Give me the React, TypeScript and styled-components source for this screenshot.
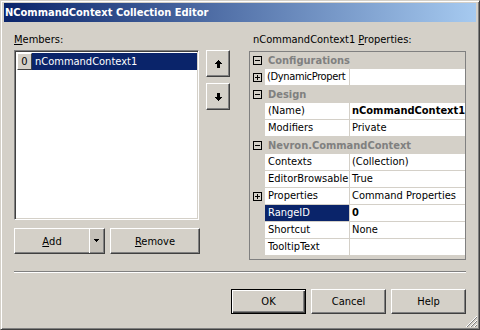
import React from "react";
import styled, { createGlobalStyle, css } from "styled-components";

const FONT = `"DejaVu Sans Condensed", "DejaVu Sans", sans-serif`;
const NAVY = "#0a246a";
const FACE = "#d4d0c8";

const GlobalStyle = createGlobalStyle`
  html, body { margin: 0; padding: 0; background: ${FACE}; }
  body { font-family: ${FONT}; font-size: 11px; }
`;

type Row =
  | { kind: "cat"; name: string }
  | {
      kind: "prop";
      name: string;
      value: string;
      bold?: boolean;
      plus?: boolean;
      selected?: boolean;
      tight?: boolean;
    };

const rows: Row[] = [
  { kind: "cat", name: "Configurations" },
  { kind: "prop", name: "(DynamicPropert", value: "", plus: true, tight: true },
  { kind: "cat", name: "Design" },
  { kind: "prop", name: "(Name)", value: "nCommandContext1", bold: true },
  { kind: "prop", name: "Modifiers", value: "Private" },
  { kind: "cat", name: "Nevron.CommandContext" },
  { kind: "prop", name: "Contexts", value: "(Collection)" },
  { kind: "prop", name: "EditorBrowsable", value: "True" },
  { kind: "prop", name: "Properties", value: "Command Properties", plus: true },
  { kind: "prop", name: "RangeID", value: "0", bold: true, selected: true },
  { kind: "prop", name: "Shortcut", value: "None" },
  { kind: "prop", name: "TooltipText", value: "" },
];

const Expander = ({ open }: { open: boolean }) => (
  <svg width="9" height="9" viewBox="0 0 9 9" shapeRendering="crispEdges">
    <rect x="0.5" y="0.5" width="8" height="8" fill="none" stroke="#000" />
    <rect x="2" y="4" width="5" height="1" fill="#000" />
    {!open && <rect x="4" y="2" width="1" height="5" fill="#000" />}
  </svg>
);

const ArrowUp = () => (
  <svg width="7" height="8" viewBox="0 0 7 8" shapeRendering="crispEdges">
    <rect x="3" y="0" width="1" height="1" />
    <rect x="2" y="1" width="3" height="1" />
    <rect x="1" y="2" width="5" height="1" />
    <rect x="0" y="3" width="7" height="1" />
    <rect x="2" y="4" width="3" height="4" />
  </svg>
);

const ArrowDown = () => (
  <svg width="7" height="8" viewBox="0 0 7 8" shapeRendering="crispEdges">
    <rect x="2" y="0" width="3" height="4" />
    <rect x="0" y="4" width="7" height="1" />
    <rect x="1" y="5" width="5" height="1" />
    <rect x="2" y="6" width="3" height="1" />
    <rect x="3" y="7" width="1" height="1" />
  </svg>
);

const Grip = () => (
  <svg width="12" height="12" viewBox="0 0 12 12" shapeRendering="crispEdges">
    {[0, 4, 8].map(o => (
      <g key={o}>
        <path d={`M${o + 1} 12 L12 ${o + 1}`} stroke="#fff" strokeWidth="1" />
        <path d={`M${o + 2} 12 L12 ${o + 2}`} stroke="#808080" strokeWidth="1.4" />
      </g>
    ))}
  </svg>
);

export default function App() {
  return (
    <>
      <GlobalStyle />
      <Window>
        <TitleBar>NCommandContext Collection Editor</TitleBar>
        <Body>
          <Main>
            <LeftCol>
              <Label>
                <u>M</u>embers:
              </Label>
              <ListRow>
                <ListBox>
                  <ListItem>
                    <IndexCell>0</IndexCell>
                    <ItemText>nCommandContext1</ItemText>
                  </ListItem>
                </ListBox>
                <ArrowCol>
                  <ArrowButton>
                    <ArrowUp />
                  </ArrowButton>
                  <ArrowButton>
                    <ArrowDown />
                  </ArrowButton>
                </ArrowCol>
              </ListRow>
              <ActionRow>
                <SplitButton>
                  <SplitMain>
                    <u>A</u>dd
                  </SplitMain>
                  <SplitDrop>
                    <svg width="5" height="3" viewBox="0 0 5 3" shapeRendering="crispEdges">
                      <path d="M0 0h5v1h-5zM1 1h3v1h-3zM2 2h1v1h-1z" />
                    </svg>
                  </SplitDrop>
                </SplitButton>
                <ActionButton>
                  <u>R</u>emove
                </ActionButton>
              </ActionRow>
            </LeftCol>
            <RightCol>
              <Label $indent>
                nCommandContext1 <u>P</u>roperties:
              </Label>
              <PropGrid>
                {rows.map((r, i) =>
                  r.kind === "cat" ? (
                    <CatRow key={i}>
                      <Margin>
                        <Expander open />
                      </Margin>
                      <CatName>{r.name}</CatName>
                    </CatRow>
                  ) : (
                    <PropRow key={i}>
                      <Margin>{r.plus && <Expander open={false} />}</Margin>
                      <NameCell $selected={r.selected} $tight={r.tight}>
                        {r.name}
                      </NameCell>
                      <ValueCell $bold={r.bold}>{r.value}</ValueCell>
                    </PropRow>
                  )
                )}
              </PropGrid>
            </RightCol>
          </Main>
          <Separator />
          <ButtonRow>
            <DialogButton $default>OK</DialogButton>
            <DialogButton>Cancel</DialogButton>
            <DialogButton>Help</DialogButton>
          </ButtonRow>
        </Body>
        <GripSpot>
          <Grip />
        </GripSpot>
      </Window>
    </>
  );
}

const Window = styled.div`
  position: relative;
  width: 480px;
  height: 330px;
  box-sizing: border-box;
  background: ${FACE};
  border: 1px solid;
  border-color: ${FACE} #404040 #404040 ${FACE};
  box-shadow: inset 1px 1px #fff, inset -1px -1px #808080;
  padding: 2px 3px 3px 3px;
  display: flex;
  flex-direction: column;
`;

const TitleBar = styled.div`
  height: 19px;
  line-height: 19px;
  padding-left: 1px;
  background: linear-gradient(to right, ${NAVY}, #a6caf0);
  color: #fff;
  font-weight: bold;
  font-size: 11px;
  white-space: nowrap;
`;

const Body = styled.div`
  flex: 1;
  padding: 11px 10px 0 10px;
  display: flex;
  flex-direction: column;
`;

const Main = styled.div`
  display: flex;
  justify-content: space-between;
  align-items: flex-start;
`;

const LeftCol = styled.div`
  width: 216px;
  display: flex;
  flex-direction: column;
`;

const RightCol = styled.div`
  width: 217px;
  display: flex;
  flex-direction: column;
`;

const Label = styled.div<{ $indent?: boolean }>`
  height: 13px;
  line-height: 13px;
  margin-bottom: ${p => (p.$indent ? 5 : 4)}px;
  padding-left: ${p => (p.$indent ? 4 : 0)}px;
  white-space: nowrap;
`;

const ListRow = styled.div`
  display: flex;
  gap: 7px;
  align-items: flex-start;
`;

const ListBox = styled.div`
  width: 185px;
  height: 170px;
  box-sizing: border-box;
  background: #fff;
  border: 1px solid;
  border-color: #808080 #fff #fff #808080;
  box-shadow: inset 1px 1px #404040, inset -1px -1px ${FACE};
  padding: 2px 1px 1px 2px;
`;

const ListItem = styled.div`
  display: flex;
  height: 17px;
`;

const IndexCell = styled.div`
  width: 15px;
  box-sizing: border-box;
  background: ${FACE};
  border: 1px solid;
  border-color: #fff #404040 #404040 #fff;
  text-align: center;
  line-height: 15px;
`;

const ItemText = styled.div`
  flex: 1;
  background: ${NAVY};
  color: #fff;
  padding-left: 3px;
  line-height: 17px;
`;

const ArrowCol = styled.div`
  display: flex;
  flex-direction: column;
  gap: 6px;
`;

const raised = css`
  background: ${FACE};
  border: 1px solid;
  border-color: #fff #404040 #404040 #fff;
  box-shadow: inset -1px -1px #808080;
  box-sizing: border-box;
  padding: 0;
  font-family: ${FONT};
  font-size: 11px;
  color: #000;
`;

const ArrowButton = styled.button`
  ${raised};
  width: 24px;
  height: 27px;
  display: flex;
  align-items: center;
  justify-content: center;
`;

const ActionRow = styled.div`
  display: flex;
  gap: 5px;
  margin-top: 8px;
`;

const SplitButton = styled.div`
  ${raised};
  width: 91px;
  height: 26px;
  display: flex;
`;

const SplitMain = styled.div`
  flex: 1;
  display: flex;
  align-items: center;
  justify-content: center;
  border-right: 1px solid #fff;
`;

const SplitDrop = styled.div`
  width: 13px;
  margin: 0 1px 1px 0;
  background: #c4c0b8;
  display: flex;
  align-items: center;
  justify-content: center;
`;

const ActionButton = styled.button`
  ${raised};
  width: 90px;
  height: 26px;
`;

const PropGrid = styled.div`
  height: 209px;
  box-sizing: border-box;
  border: 1px solid #808080;
  background: ${FACE};
  display: flex;
  flex-direction: column;
`;

const CatRow = styled.div`
  display: flex;
  height: 17px;
  align-items: center;
`;

const Margin = styled.div`
  width: 15px;
  height: 17px;
  flex-shrink: 0;
  display: flex;
  align-items: center;
  justify-content: center;
`;

const CatName = styled.div`
  padding-left: 3px;
  font-weight: bold;
  color: #808080;
  white-space: nowrap;
`;

const PropRow = styled.div`
  display: flex;
  height: 17px;
`;

const NameCell = styled.div<{ $selected?: boolean; $tight?: boolean }>`
  width: 84px;
  height: 16px;
  line-height: 16px;
  padding-left: ${p => (p.$tight ? 2 : 3)}px;
  box-sizing: border-box;
  overflow: hidden;
  white-space: nowrap;
  margin-right: 1px;
  letter-spacing: ${p => (p.$tight ? "-0.35px" : "normal")};
  background: ${p => (p.$selected ? NAVY : "#fff")};
  color: ${p => (p.$selected ? "#fff" : "#000")};
`;

const ValueCell = styled.div<{ $bold?: boolean }>`
  flex: 1;
  height: 16px;
  line-height: 16px;
  padding-left: 2px;
  overflow: hidden;
  white-space: nowrap;
  background: #fff;
  font-weight: ${p => (p.$bold ? "bold" : "normal")};
`;

const Separator = styled.div`
  margin-top: 11px;
  border-top: 1px solid #808080;
  border-bottom: 1px solid #fff;
  height: 0;
`;

const ButtonRow = styled.div`
  display: flex;
  justify-content: flex-end;
  gap: 5px;
  margin-top: 16px;
`;

const DialogButton = styled.button<{ $default?: boolean }>`
  ${raised};
  width: 75px;
  height: 25px;
  ${p =>
    p.$default &&
    css`
      border: 1px solid #000;
      box-shadow: inset 1px 1px #fff, inset -1px -1px #404040, inset -2px -2px #808080;
    `}
`;

const GripSpot = styled.div`
  position: absolute;
  right: 2px;
  bottom: 2px;
  width: 12px;
  height: 12px;
  line-height: 0;
`;
